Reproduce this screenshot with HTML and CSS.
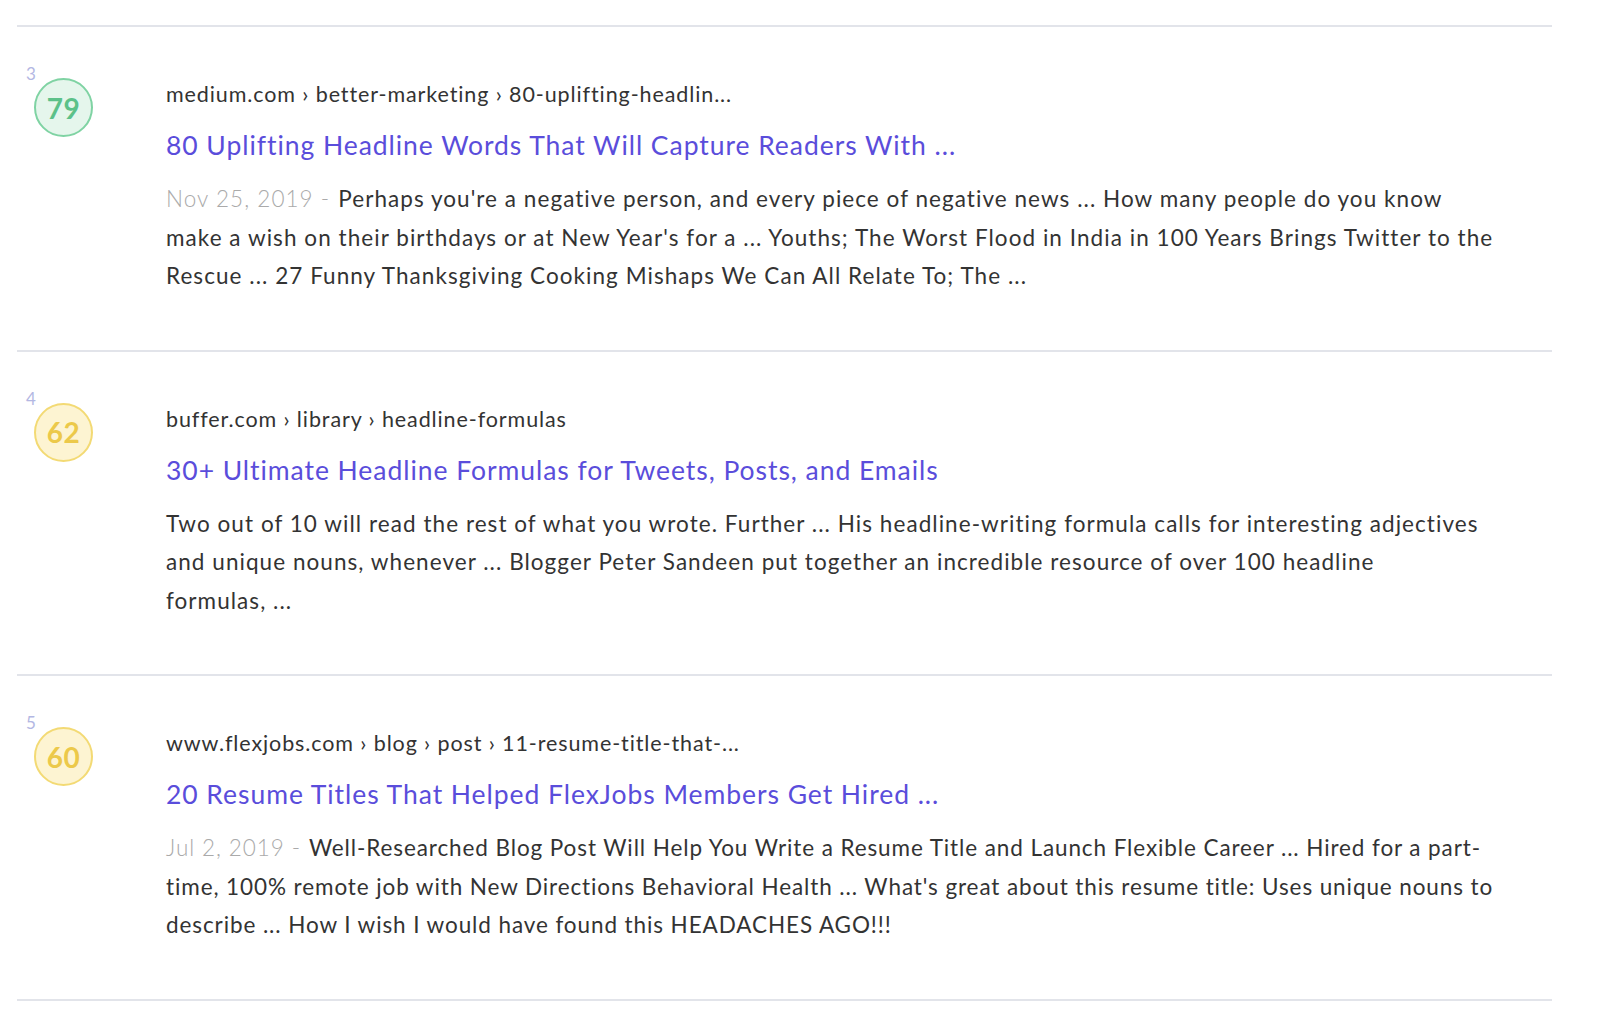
FILE: index.html
```html
<!DOCTYPE html>
<html lang="en">
<head>
<meta charset="utf-8">
<title>Results</title>
<link rel="stylesheet" href="styles.css">
</head>
<body>
<div class="list">
  <div class="result">
    <div class="side">
      <div class="rank">3</div>
      <div class="score score-green">79</div>
    </div>
    <div class="main">
      <div class="crumb">medium.com › better-marketing › 80-uplifting-headlin...</div>
      <a class="title" href="#">80 Uplifting Headline Words That Will Capture Readers With&nbsp;...</a>
      <p class="snippet"><span class="date">Nov 25, 2019 -</span><span class="text">Perhaps you're a negative person, and every piece of negative news ... How many people do you know make a wish on their birthdays or at New Year's for a ... Youths; The Worst Flood in India in 100 Years Brings Twitter to the Rescue ... 27 Funny Thanksgiving Cooking Mishaps We Can All Relate To; The&nbsp;...</span></p>
    </div>
  </div>
  <div class="result">
    <div class="side">
      <div class="rank">4</div>
      <div class="score score-yellow">62</div>
    </div>
    <div class="main">
      <div class="crumb">buffer.com › library › headline-formulas</div>
      <a class="title" href="#">30+ Ultimate Headline Formulas for Tweets, Posts, and Emails</a>
      <p class="snippet"><span class="text">Two out of 10 will read the rest of what you wrote. Further ... His headline-writing formula calls for interesting adjectives and unique nouns, whenever ... Blogger Peter Sandeen put together an incredible resource of over 100 headline formulas,&nbsp;...</span></p>
    </div>
  </div>
  <div class="result">
    <div class="side">
      <div class="rank">5</div>
      <div class="score score-yellow">60</div>
    </div>
    <div class="main">
      <div class="crumb">www.flexjobs.com › blog › post › 11-resume-title-that-...</div>
      <a class="title" href="#">20 Resume Titles That Helped FlexJobs Members Get Hired&nbsp;...</a>
      <p class="snippet snippet-tight"><span class="date">Jul 2, 2019 -</span><span class="text">Well-Researched Blog Post Will Help You Write a Resume Title and Launch Flexible Career ... Hired for a part-time, 100% remote job with New Directions Behavioral Health ... What's great about this resume title: Uses unique nouns to describe ... How I wish I would have found this HEADACHES AGO!!!</span></p>
    </div>
  </div>
</div>
</body>
</html>
```

FILE: styles.css
```css
html, body {
  margin: 0;
  padding: 0;
  background: #ffffff;
}

body {
  font-family: Lato, "Open Sans", sans-serif;
  color: #333333;
}

.list {
  margin-left: 17px;
  width: 1535px;
  padding-top: 25px;
}

.result {
  display: grid;
  grid-template-columns: 149px 1fr;
  border-top: 2px solid #e2e4ea;
  padding: 40px 52px 54px 0;
}

.result:last-child {
  border-bottom: 2px solid #e2e4ea;
}

.side {
  display: flex;
  flex-direction: column;
  align-items: flex-start;
}

.rank {
  margin-left: 9px;
  font-size: 17px;
  line-height: 14px;
  height: 14px;
  color: #b3b7e3;
}

.score {
  margin-top: -3px;
  margin-left: 17px;
  width: 55px;
  height: 55px;
  border-radius: 50%;
  border: 2px solid;
  display: flex;
  align-items: center;
  justify-content: center;
  font-size: 28px;
  font-weight: 700;
  letter-spacing: 0.5px;
}

.score-green {
  background: #e5f6ec;
  border-color: #7fd3a3;
  color: #5cc189;
}

.score-yellow {
  background: #fdf4d2;
  border-color: #f3da74;
  color: #ecc94a;
}

.main {
  margin-top: 13px;
  display: flex;
  flex-direction: column;
  align-items: flex-start;
}

.crumb {
  font-size: 21.5px;
  line-height: 28px;
  letter-spacing: 0.9px;
  color: #333333;
}

.title {
  margin-top: 20px;
  font-size: 26.5px;
  line-height: 34px;
  letter-spacing: 0.95px;
  color: #5a4ddb;
  text-decoration: none;
}

.snippet {
  margin: 18px 0 0 0;
  font-size: 22.5px;
  line-height: 38.5px;
  letter-spacing: 1.05px;
  color: #333333;
}

.snippet-tight {
  letter-spacing: 0.9px;
}

.date {
  margin-right: 8px;
  color: #aaaaaa;
  font-weight: 300;
}
```
